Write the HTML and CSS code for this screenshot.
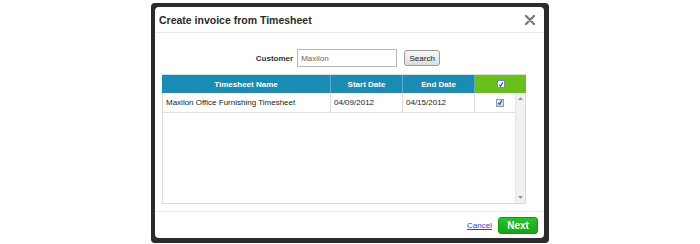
FILE: index.html
```html
<!DOCTYPE html>
<html lang="en">

<head>
    <meta charset="UTF-8">
    <meta name="viewport" content="width=device-width, initial-scale=1.0">
    <title>Create invoice from Timesheet</title>
    <link rel="stylesheet" href="styles.css">
</head>

<body>
    <div class="frame">
        <div class="dialog">
            <div class="dialog-head">
                <span class="title">Create invoice from Timesheet</span>
                <span class="close">
                    <svg width="10" height="10" viewBox="0 0 10 10">
                        <path d="M1 1 L9 9 M9 1 L1 9" stroke="#7a7a7a" stroke-width="2.4" stroke-linecap="round" />
                    </svg>
                </span>
            </div>

            <div class="dialog-body">
                <div class="search-row">
                    <label class="search-label">Customer</label>
                    <input class="search-input" type="text" value="Maxilon">
                    <button class="search-btn">Search</button>
                </div>

                <div class="grid">
                    <div class="grid-head">
                        <div class="hcell c-name">Timesheet Name</div>
                        <div class="hcell c-start">Start Date</div>
                        <div class="hcell c-end">End Date</div>
                        <div class="hcell c-check">
                            <span class="check check-head">
                                <svg width="7" height="7" viewBox="0 0 7 7">
                                    <path d="M1.5 3.8 L3 5.6 L5.8 0.8" fill="none" stroke="#1d3f9a" stroke-width="1.3" />
                                </svg>
                            </span>
                        </div>
                    </div>
                    <div class="grid-body">
                        <div class="rows">
                            <div class="row">
                                <div class="cell c-name">Maxilon Office Furnishing Timesheet</div>
                                <div class="cell c-start">04/09/2012</div>
                                <div class="cell c-end">04/15/2012</div>
                                <div class="cell c-check b-check">
                                    <span class="check">
                                        <svg width="7" height="7" viewBox="0 0 7 7">
                                            <path d="M1.5 3.8 L3 5.6 L5.8 0.8" fill="none" stroke="#1d3f9a" stroke-width="1.3" />
                                        </svg>
                                    </span>
                                </div>
                            </div>
                        </div>
                        <div class="scrollbar">
                            <svg width="5" height="3" viewBox="0 0 5 3"><path d="M0 3 L2.5 0 L5 3 Z" fill="#9a9a9a" /></svg>
                            <svg width="5" height="3" viewBox="0 0 5 3"><path d="M0 0 L2.5 3 L5 0 Z" fill="#9a9a9a" /></svg>
                        </div>
                    </div>
                </div>
            </div>

            <div class="dialog-foot">
                <a class="cancel" href="#">Cancel</a>
                <button class="next-btn">Next</button>
            </div>
        </div>
    </div>
</body>

</html>
```

FILE: styles.css
```css
* {
    margin: 0;
    padding: 0;
    box-sizing: border-box;
}

body {
    background-color: #fff;
    font-family: "Liberation Sans", Arial, sans-serif;
    color: #222;
}

.frame {
    width: 398px;
    height: 240px;
    margin: 3px 0 0 151px;
    padding: 4px 5px 5px 4px;
    background-color: #2b2b2b;
    border-radius: 4px;
}

.dialog {
    height: 100%;
    background-color: #fff;
    border-radius: 4px;
    display: flex;
    flex-direction: column;
}

.dialog-head {
    height: 26px;
    padding: 0 9px 0 4px;
    border-bottom: 1px solid #e8e8e8;
    display: flex;
    justify-content: space-between;
    align-items: center;
}

.title {
    font-size: 10.5px;
    font-weight: bold;
    color: #2a2a2a;
}

.close {
    display: flex;
}

.dialog-body {
    padding: 16px 18px 0 7px;
}

.search-row {
    height: 18px;
    display: flex;
    justify-content: center;
    align-items: center;
    padding-left: 8px;
}

.search-label {
    font-size: 8px;
    font-weight: bold;
    color: #333;
    margin-right: 4px;
}

.search-input {
    width: 100px;
    height: 18px;
    border: 1px solid #b8b8b8;
    padding: 0 3px;
    font-family: "Liberation Sans", Arial, sans-serif;
    font-size: 8px;
    color: #666;
    margin-right: 7px;
}

.search-btn {
    width: 36px;
    height: 16px;
    border: 1px solid #9a9a9a;
    border-radius: 3px;
    background: linear-gradient(#f8f8f8, #dcdcdc);
    font-family: "Liberation Sans", Arial, sans-serif;
    font-size: 8px;
    color: #222;
}

.grid {
    margin-top: 7px;
    width: 364px;
}

.grid-head {
    height: 19px;
    display: flex;
    border-top: 1px solid #dcdcdc;
}

.hcell {
    background-color: #1b8bb4;
    color: #fff;
    font-size: 8px;
    font-weight: bold;
    display: flex;
    justify-content: center;
    align-items: center;
    border-right: 1px solid #5aaed0;
}

.hcell.c-name {
    width: 169px;
}

.hcell.c-start {
    width: 72px;
}

.hcell.c-end {
    width: 72px;
}

.hcell.c-check {
    width: 51px;
    background-color: #6bbf1b;
    border-right: none;
}

.grid-body {
    height: 111px;
    display: flex;
    border: 1px solid #d8d8d8;
    border-top: none;
}

.rows {
    flex: 1;
}

.row {
    height: 20px;
    display: flex;
    border-bottom: 1px solid #dedede;
}

.cell {
    font-size: 8px;
    color: #222;
    display: flex;
    align-items: center;
    padding-left: 3px;
    border-right: 1px solid #dedede;
}

.cell.c-name {
    width: 168px;
}

.cell.c-start {
    width: 72px;
}

.cell.c-end {
    width: 72px;
}

.b-check {
    flex: 1;
    justify-content: center;
    padding-left: 10px;
    border-right: none;
}

.check {
    width: 8px;
    height: 8px;
    border: 1px solid #8c9bb3;
    background: linear-gradient(#e9eef6, #c7d2e2);
    display: flex;
    justify-content: center;
    align-items: center;
}

.check-head {
    background: #fff;
    border-color: #6f8fb0;
}

.scrollbar {
    width: 10px;
    background-color: #f1f1f1;
    border-left: 1px solid #e4e4e4;
    display: flex;
    flex-direction: column;
    justify-content: space-between;
    align-items: center;
    padding: 4px 0 4px;
}

.dialog-foot {
    margin-top: 7px;
    border-top: 1px solid #ececec;
    flex: 1;
    display: flex;
    justify-content: flex-end;
    align-items: center;
    padding-right: 6px;
}

.cancel {
    font-size: 8px;
    color: #3a3ad0;
    margin-right: 6px;
}

.next-btn {
    width: 40px;
    height: 17px;
    border: 1px solid #159015;
    border-radius: 3px;
    background: linear-gradient(#2ec02e, #14a514);
    color: #fff;
    font-family: "Liberation Sans", Arial, sans-serif;
    font-size: 10px;
    font-weight: bold;
}
```
